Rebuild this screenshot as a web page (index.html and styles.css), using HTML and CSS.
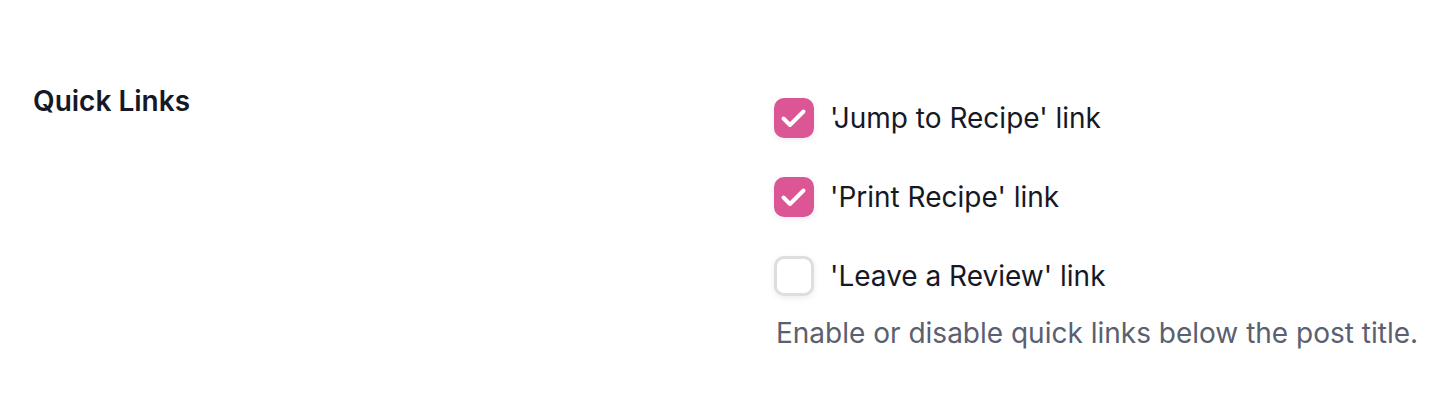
FILE: index.html
```html
<html>
	<head>
		<title>Quick Links</title>
		<meta name="viewport" content="width=device-width, initial-scale=1.0">
		<link rel="stylesheet" href="styles.css">
	</head>
	<body>
		<div class="setting">
			<div class="setting-label">Quick Links</div>
			<div class="setting-body">
				<label class="option">
					<span class="box checked">
						<svg viewBox="0 0 40 40" width="40" height="40"><path d="M9.5 20.5l6.5 6.5 13.5-13.5" fill="none" stroke="#fff" stroke-width="4" stroke-linecap="round" stroke-linejoin="round"/></svg>
					</span>
					<span class="option-text">'Jump to Recipe' link</span>
				</label>
				<label class="option">
					<span class="box checked">
						<svg viewBox="0 0 40 40" width="40" height="40"><path d="M9.5 20.5l6.5 6.5 13.5-13.5" fill="none" stroke="#fff" stroke-width="4" stroke-linecap="round" stroke-linejoin="round"/></svg>
					</span>
					<span class="option-text">'Print Recipe' link</span>
				</label>
				<label class="option">
					<span class="box"></span>
					<span class="option-text">'Leave a Review' link</span>
				</label>
				<p class="help">Enable or disable quick links below the post title.</p>
			</div>
		</div>
	</body>
</html>
```

FILE: styles.css
```css
body {
	margin: 0;
	background-color: #ffffff;
	font-family: Inter, "Noto Sans", sans-serif;
	color: #161925;
}
.setting {
	display: grid;
	grid-template-columns: 741px 1fr;
	padding: 84px 33px 0 33px;
}
.setting-label {
	font-size: 28px;
	font-weight: 600;
	line-height: 34px;
}
.setting-body {
	display: flex;
	flex-direction: column;
	gap: 39px;
	padding-top: 14px;
}
.option {
	display: flex;
	align-items: center;
	gap: 16px;
	height: 40px;
}
.box {
	width: 40px;
	height: 40px;
	box-sizing: border-box;
	border-radius: 10px;
	border: 3px solid #dedede;
	background: #ffffff;
	box-shadow: 0 2px 6px rgba(0, 0, 0, 0.08);
	display: flex;
	align-items: center;
	justify-content: center;
	overflow: hidden;
}
.box.checked {
	background: #dc5695;
	border: none;
}
.option-text {
	font-size: 28px;
	line-height: 40px;
}
.help {
	margin: -20px 0 0 2px;
	font-size: 28px;
	line-height: 36px;
	color: #5a6070;
}
```
